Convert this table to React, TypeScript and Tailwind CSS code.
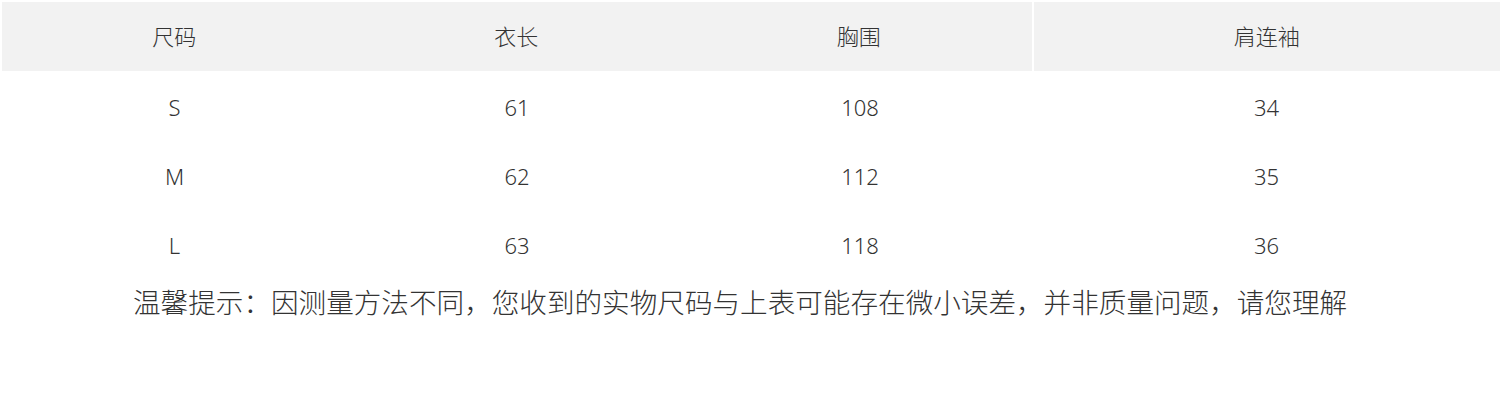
const header = ['尺码', '衣长', '胸围', '肩连袖']

const rows = [
  ['S', '61', '108', '34'],
  ['M', '62', '112', '35'],
  ['L', '63', '118', '36'],
]

const cols = ['w-[345px]', 'w-[340px]', 'w-[346px]', 'w-[467px]']

export default function App() {
  return (
    <div
      className="w-[1500px] h-[414px] bg-white text-[#333] pt-[2px] pl-[2px]"
      style={{ fontFamily: '"Noto Sans", "Noto Sans CJK SC", sans-serif' }}
    >
      {/* 表头 */}
      <div className="flex h-[69px] text-[22px] font-light">
        {header.map((h, i) => (
          <div
            key={h}
            className={`${cols[i]} ${i === 3 ? 'ml-[2px] w-[465px]' : ''} bg-[#f2f2f2] flex items-center justify-center pb-[1px]`}
          >
            {h}
          </div>
        ))}
      </div>

      {rows.map((r) => (
        <div key={r[0]} className="flex h-[69px] text-[22px] font-light">
          {r.map((c, i) => (
            <div key={i} className={`${cols[i]} flex items-center justify-center pt-[3px]`}>
              {c}
            </div>
          ))}
        </div>
      ))}

      <p className="pl-[131px] text-[27.6px] leading-[48px] font-light">
        温馨提示：因测量方法不同，您收到的实物尺码与上表可能存在微小误差，并非质量问题，请您理解
      </p>
    </div>
  )
}
